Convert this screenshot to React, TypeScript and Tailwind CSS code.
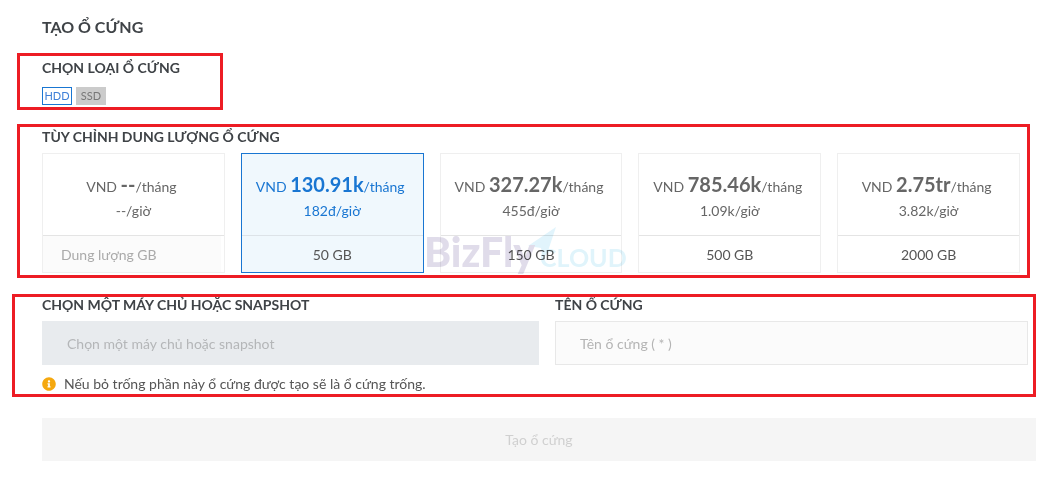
import { FaInfoCircle } from "react-icons/fa";

const plans = [
  { price: "--", hour: "--/giờ", size: "Dung lượng GB" },
  { price: "130.91k", hour: "182đ/giờ", size: "50 GB", active: true },
  { price: "327.27k", hour: "455đ/giờ", size: "150 GB" },
  { price: "785.46k", hour: "1.09k/giờ", size: "500 GB" },
  { price: "2.75tr", hour: "3.82k/giờ", size: "2000 GB" },
];

function Heading({ children }: { children: React.ReactNode }) {
  return <div className="text-[14px] leading-[20px] font-bold text-[#3f4347]">{children}</div>;
}

export default function App() {
  return (
    <div className="relative w-[1053px] h-[502px] bg-white overflow-hidden font-['Lato','Noto_Sans',sans-serif] text-[#666]">
      <div className="pl-[42px] pr-[17px] pt-[16px]">
        <div className="text-[16px] leading-[22px] font-bold text-[#3f4347]">TẠO Ổ CỨNG</div>

        <div className="mt-[20px]">
          <Heading>CHỌN LOẠI Ổ CỨNG</Heading>
          <div className="mt-[9px] flex gap-[4px] text-[11px]">
            <div className="w-[30px] h-[18px] border border-[#1976d2] text-[#3f80d8] flex items-center justify-center">HDD</div>
            <div className="w-[30px] h-[18px] bg-[#cbcbcb] text-[#777] flex items-center justify-center">SSD</div>
          </div>
        </div>

        <div className="mt-[22px]">
          <Heading>TÙY CHỈNH DUNG LƯỢNG Ổ CỨNG</Heading>
          <div className="mt-[6px] w-[978px] grid grid-cols-5 gap-[16px]">
            {plans.map((p, i) => (
              <div
                key={i}
                className={`h-[120px] border flex flex-col ${p.active ? "border-[#1976d2] bg-[#f0f8fd] text-[#1976d2]" : "border-[#efefef] bg-white"}`}
              >
                <div className={`h-[82px] flex flex-col items-center pt-[15px] pr-[4px] border-b ${p.active ? "border-[#dde3e8]" : "border-[#e4e4e4]"}`}>
                  <div className="text-[14px] leading-[30px] whitespace-nowrap">
                    VND <span className="text-[20px] font-bold">{p.price}</span>/tháng
                  </div>
                  <div className="text-[14px] leading-[18px] ml-[4px]">{p.hour}</div>
                </div>
                {i === 0 ? (
                  <div className="flex-1 mr-[3px] bg-[#fbfbfb] pl-[18px] flex items-center text-[14px] text-[#aaa]">{p.size}</div>
                ) : (
                  <div className="flex-1 flex items-center justify-center text-[14px] text-[#555]">{p.size}</div>
                )}
              </div>
            ))}
          </div>
        </div>

        <div className="mt-[22px] flex gap-[16px]">
          <div className="w-[497px]">
            <Heading>CHỌN MỘT MÁY CHỦ HOẶC SNAPSHOT</Heading>
            <div className="mt-[6px] h-[44px] bg-[#e8ebee] pl-[25px] flex items-center text-[14px] text-[#b4b6b8]">
              Chọn một máy chủ hoặc snapshot
            </div>
          </div>
          <div className="w-[473px]">
            <Heading>TÊN Ổ CỨNG</Heading>
            <div className="mt-[6px] h-[44px] bg-[#fbfbfb] border border-[#e8e8e8] pl-[24px] flex items-center text-[14px] text-[#b4b4b4]">
              Tên ổ cứng ( * )
            </div>
          </div>
        </div>

        <div className="mt-[10px] flex items-center gap-[8px] text-[14px] leading-[18px] text-[#555]">
          <FaInfoCircle className="text-[#f5a80f] w-[14px] h-[14px]" />
          <span>Nếu bỏ trống phần này ổ cứng được tạo sẽ là ổ cứng trống.</span>
        </div>

        <div className="mt-[25px] h-[43px] bg-[#f5f5f5] flex items-center justify-center text-[14px] text-[#d0d0d0]">
          Tạo ổ cứng
        </div>
      </div>

      <div className="absolute left-[17px] top-[53px] w-[206px] h-[57px] border-[3px] border-[#ed1c24]" />
      <div className="absolute left-[17px] top-[124px] w-[1013px] h-[154px] border-[3px] border-[#ed1c24]" />
      <div className="absolute left-[12px] top-[294px] w-[1024px] h-[103px] border-[3px] border-[#ed1c24]" />

      <div className="absolute left-[426px] top-[226px] w-[200px] h-[50px] pointer-events-none mix-blend-multiply">
        <svg className="absolute left-[98px] top-0" width="60" height="42" viewBox="0 0 60 42">
          <path d="M32 1 L4 20 L17 22 L19 34 L24 25 Z" fill="#d9f1fb" opacity="0.8" />
        </svg>
        <span className="absolute left-[-2px] top-[4px] text-[41px] leading-[44px] font-black text-[#e0dcea]">BizFly</span>
        <span className="absolute left-[114px] top-[15px] text-[25px] leading-[32px] font-bold text-[#e0f4fb]">CLOUD</span>
      </div>
    </div>
  );
}
